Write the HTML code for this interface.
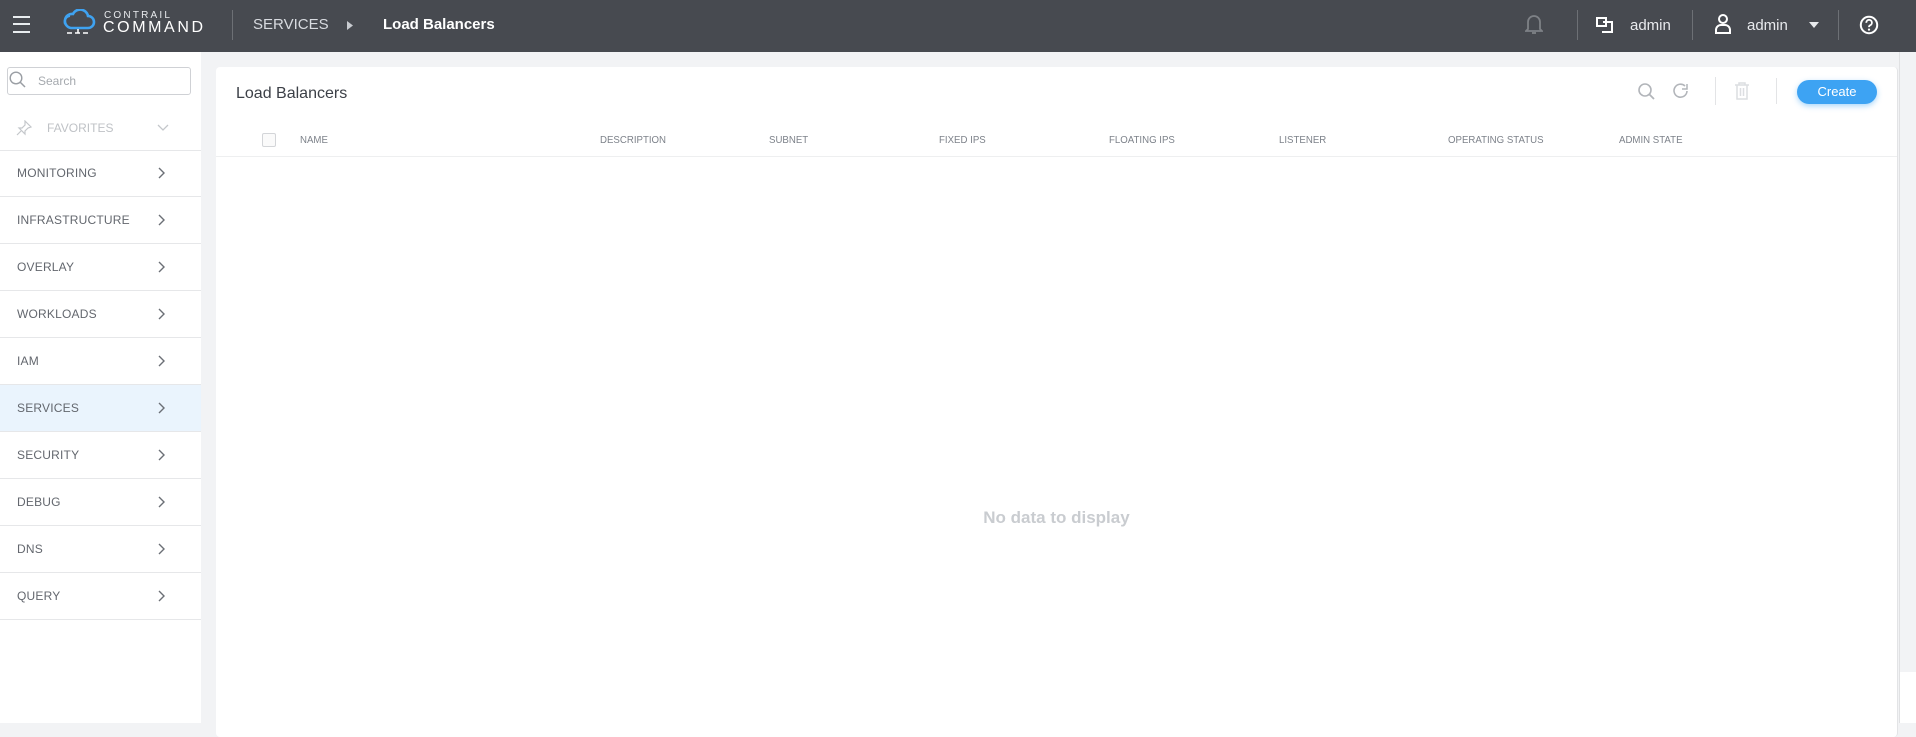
<!DOCTYPE html>
<html><head><meta charset="utf-8"><style>
*{box-sizing:border-box;margin:0;padding:0}
body{width:1916px;height:723px;overflow:hidden;background:#f2f3f5;font-family:"Liberation Sans",sans-serif;position:relative}
.top{position:absolute;left:0;top:0;width:1916px;height:52px;background:#474a50;color:#fff}
.abs{position:absolute}
.ham{position:absolute;left:13px;width:17px;height:2px;background:#e8ecef}
.sep{position:absolute;width:1px;background:#6d7075}
.side{position:absolute;left:0;top:52px;width:201px;height:671px;background:#fff}
.row{position:absolute;left:0;width:201px;height:47px;border-bottom:1px solid #e6e7e9;font-size:12px;color:#63676e;padding-left:17px;line-height:46px;letter-spacing:.2px}
.row svg{position:absolute;left:158px;top:17px}
.card{position:absolute;left:216px;top:67px;width:1682px;height:670px;background:#fff;border-radius:4px;border-right:1px solid #e3e4e6}
.th{position:absolute;top:67px;font-size:10.5px;color:#7d828a;transform:scaleX(.92);transform-origin:left}
</style></head><body>
<div class="top">
 <div class="ham" style="top:16px"></div><div class="ham" style="top:23px"></div><div class="ham" style="top:31px"></div>
 <svg class="abs" style="left:62px;top:9px" width="34" height="26" viewBox="0 0 34 26"><path d="M9 19 H26 a6 6 0 0 0 0-12 a8 8 0 0 0-15-2 a7 7 0 0 0-2 14z" fill="none" stroke="#3fa2f0" stroke-width="2.6"/><path d="M3 15 a6 6 0 0 1 5-8" fill="none" stroke="#3fa2f0" stroke-width="2"/><path d="M5 24h5M13 24h5M21 24h5M16 20v4" stroke="#fff" stroke-width="1.5"/></svg>
 <div class="abs" style="left:104px;top:10px;font-size:10px;letter-spacing:2.2px;color:#e8eaed">CONTRAIL</div>
 <div class="abs" style="left:103px;top:19px;font-size:16px;letter-spacing:2.6px;color:#fff">COMMAND</div>
 <div class="sep" style="left:232px;top:10px;height:30px"></div>
 <div class="abs" style="left:253px;top:16px;font-size:15px;color:#d8dbe0">SERVICES</div>
 <svg class="abs" style="left:347px;top:21px" width="6" height="9"><path d="M0 0L6 4.5L0 9z" fill="#c8cbd0"/></svg>
 <div class="abs" style="left:383px;top:16px;font-size:15px;font-weight:bold">Load Balancers</div>
 <svg class="abs" style="left:1525px;top:12px" width="18" height="24" viewBox="0 0 18 24"><path d="M3 17V10a6 6 0 0 1 12 0v7l2 2H1z" fill="none" stroke="#7e8186" stroke-width="1.8"/><path d="M7 21h4" stroke="#7e8186" stroke-width="1.8"/></svg>
 <div class="sep" style="left:1577px;top:10px;height:30px"></div>
 <svg class="abs" style="left:1596px;top:17px" width="20" height="17" viewBox="0 0 20 17"><path d="M1 1h9v8H1z M7 5h9v10H6" fill="none" stroke="#fff" stroke-width="2"/></svg>
 <div class="abs" style="left:1630px;top:17px;font-size:15px;color:#e8eaed">admin</div>
 <div class="sep" style="left:1692px;top:10px;height:30px"></div>
 <svg class="abs" style="left:1714px;top:13px" width="18" height="21" viewBox="0 0 18 21"><circle cx="9" cy="6" r="4" fill="none" stroke="#fff" stroke-width="2"/><path d="M2 20v-3a5 5 0 0 1 5-5h4a5 5 0 0 1 5 5v3z" fill="none" stroke="#fff" stroke-width="2"/></svg>
 <div class="abs" style="left:1747px;top:17px;font-size:15px;color:#e8eaed">admin</div>
 <svg class="abs" style="left:1809px;top:22px" width="10" height="6"><path d="M0 0h10L5 6z" fill="#e8eaed"/></svg>
 <div class="sep" style="left:1838px;top:10px;height:30px"></div>
 <svg class="abs" style="left:1859px;top:15px" width="20" height="20" viewBox="0 0 20 20"><circle cx="10" cy="10" r="8.2" fill="none" stroke="#fff" stroke-width="2"/><path d="M7.3 7.8a2.8 2.8 0 1 1 3.8 2.5c-.8.4-1.1.9-1.1 1.8" fill="none" stroke="#fff" stroke-width="1.8"/><circle cx="10" cy="14.6" r="1.1" fill="#fff"/></svg>
</div>
<div class="side">
 <div class="abs" style="left:7px;top:15px;width:184px;height:28px;border:1px solid #cfd1d5;border-radius:3px"></div>
 <svg class="abs" style="left:9px;top:19px" width="18" height="18"><circle cx="7" cy="7" r="5.8" fill="none" stroke="#9a9ea4" stroke-width="1.4"/><path d="M11 11l5 5" stroke="#9a9ea4" stroke-width="1.5"/></svg>
 <div class="abs" style="left:38px;top:22px;font-size:12px;color:#a5a9ae">Search</div>
 <svg class="abs" style="left:16px;top:68px" width="16" height="16" viewBox="0 0 16 16"><path d="M9 1l6 6-3 1-3 3 0 3-6-6 3 0 3-3z M5 11l-4 4" fill="none" stroke="#c4c7cb" stroke-width="1.2"/></svg>
 <div class="abs" style="left:47px;top:69px;font-size:12px;color:#bfc2c6">FAVORITES</div>
 <svg class="abs" style="left:157px;top:72px" width="12" height="8"><path d="M1 1l5 5 5-5" fill="none" stroke="#c4c7cb" stroke-width="1.3"/></svg>
 <div class="abs" style="left:0;top:98px;width:201px;height:1px;background:#e6e7e9"></div>
 <div class="row" style="top:98px">MONITORING<svg width="8" height="12"><path d="M1 1l5 5-5 5" fill="none" stroke="#6b6f76" stroke-width="1.4"/></svg></div>
 <div class="row" style="top:145px">INFRASTRUCTURE<svg width="8" height="12"><path d="M1 1l5 5-5 5" fill="none" stroke="#6b6f76" stroke-width="1.4"/></svg></div>
 <div class="row" style="top:192px">OVERLAY<svg width="8" height="12"><path d="M1 1l5 5-5 5" fill="none" stroke="#6b6f76" stroke-width="1.4"/></svg></div>
 <div class="row" style="top:239px">WORKLOADS<svg width="8" height="12"><path d="M1 1l5 5-5 5" fill="none" stroke="#6b6f76" stroke-width="1.4"/></svg></div>
 <div class="row" style="top:286px">IAM<svg width="8" height="12"><path d="M1 1l5 5-5 5" fill="none" stroke="#6b6f76" stroke-width="1.4"/></svg></div>
 <div class="row" style="top:333px;background:#eaf4fd">SERVICES<svg width="8" height="12"><path d="M1 1l5 5-5 5" fill="none" stroke="#6b6f76" stroke-width="1.4"/></svg></div>
 <div class="row" style="top:380px">SECURITY<svg width="8" height="12"><path d="M1 1l5 5-5 5" fill="none" stroke="#6b6f76" stroke-width="1.4"/></svg></div>
 <div class="row" style="top:427px">DEBUG<svg width="8" height="12"><path d="M1 1l5 5-5 5" fill="none" stroke="#6b6f76" stroke-width="1.4"/></svg></div>
 <div class="row" style="top:474px">DNS<svg width="8" height="12"><path d="M1 1l5 5-5 5" fill="none" stroke="#6b6f76" stroke-width="1.4"/></svg></div>
 <div class="row" style="top:521px">QUERY<svg width="8" height="12"><path d="M1 1l5 5-5 5" fill="none" stroke="#6b6f76" stroke-width="1.4"/></svg></div>
</div>
<div class="abs" style="left:1899px;top:52px;width:17px;height:620px;background:#f2f3f5;border-left:1px solid #e0e1e3"></div>
<div class="abs" style="left:1899px;top:672px;width:17px;height:51px;background:#fff;border-left:1px solid #e0e1e3"></div>
<div class="card">
 <div class="abs" style="left:20px;top:18px;font-size:16px;color:#3c4047">Load Balancers</div>
 <svg class="abs" style="left:1421px;top:15px" width="20" height="20"><circle cx="8" cy="8" r="6" fill="none" stroke="#b2b5ba" stroke-width="1.6"/><path d="M12.5 12.5l4.5 4.5" stroke="#b2b5ba" stroke-width="1.8"/></svg>
 <svg class="abs" style="left:1456px;top:15px" width="20" height="20"><path d="M15 9a6.5 6.5 0 1 1-2-5" fill="none" stroke="#b2b5ba" stroke-width="1.6"/><path d="M15 2v5h-5" fill="none" stroke="#b2b5ba" stroke-width="1.5"/></svg>
 <div class="sep" style="left:1499px;top:10px;height:28px;background:#e3e4e6"></div>
 <svg class="abs" style="left:1518px;top:15px" width="16" height="18"><path d="M1 3h14M5 3V1h6v2M3 3v14h10V3M6.5 6v8M9.5 6v8" fill="none" stroke="#dcdee1" stroke-width="1.5"/></svg>
 <div class="sep" style="left:1560px;top:11px;height:26px;background:#e3e4e6"></div>
 <div class="abs" style="left:1581px;top:13px;width:80px;height:24px;border-radius:12px;background:#3da3f3;box-shadow:0 2px 6px rgba(61,163,243,.45);color:#fff;font-size:13px;text-align:center;line-height:24px">Create</div>
 <div class="abs" style="left:46px;top:66px;width:14px;height:14px;border:1px solid #d3d5d8;border-radius:2px;background:#fafafa"></div>
 <div class="th" style="left:84px">NAME</div>
 <div class="th" style="left:384px">DESCRIPTION</div>
 <div class="th" style="left:553px">SUBNET</div>
 <div class="th" style="left:723px">FIXED IPS</div>
 <div class="th" style="left:893px">FLOATING IPS</div>
 <div class="th" style="left:1063px">LISTENER</div>
 <div class="th" style="left:1232px">OPERATING STATUS</div>
 <div class="th" style="left:1403px">ADMIN STATE</div>
 <div class="abs" style="left:0;top:89px;width:1681px;height:1px;background:#eeeff0"></div>
 <div class="abs" style="left:0;top:441px;width:1681px;text-align:center;font-size:17px;color:#c9ccd0;font-weight:bold">No data to display</div>
</div>
</body></html>
